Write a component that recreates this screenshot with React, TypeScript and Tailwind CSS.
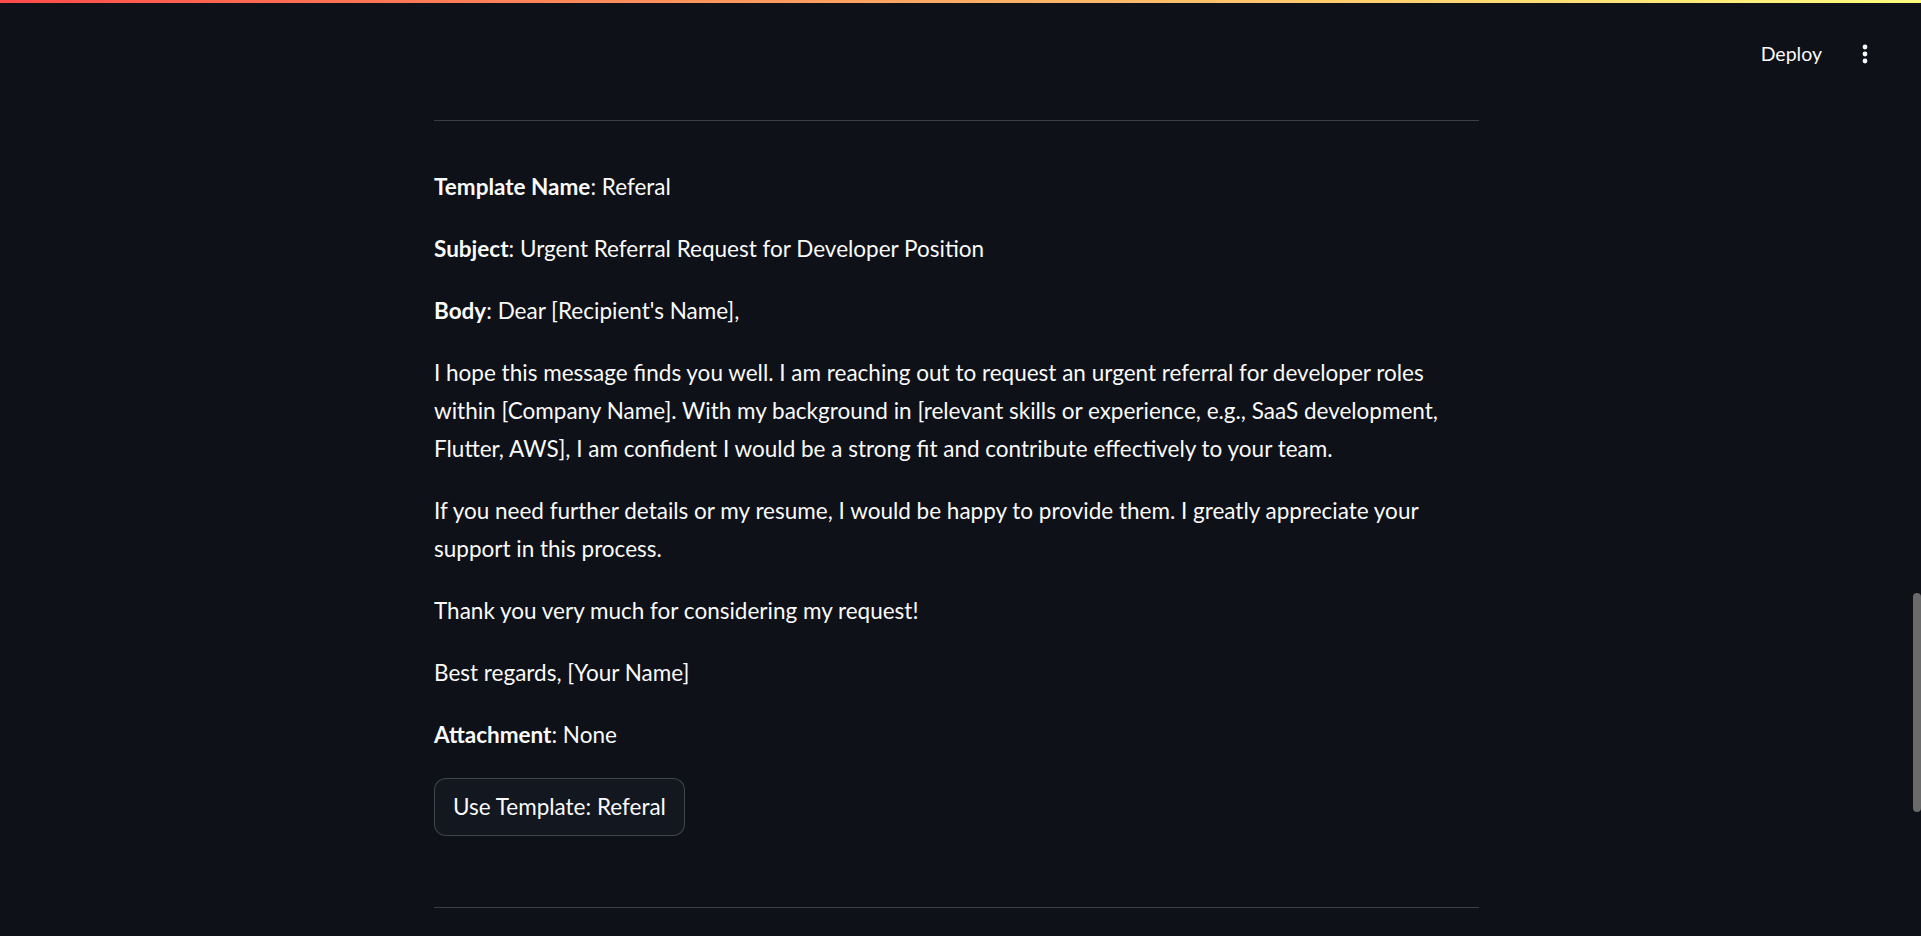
const paragraphs = [
  "I hope this message finds you well. I am reaching out to request an urgent referral for developer roles within [Company Name]. With my background in [relevant skills or experience, e.g., SaaS development, Flutter, AWS], I am confident I would be a strong fit and contribute effectively to your team.",
  "If you need further details or my resume, I would be happy to provide them. I greatly appreciate your support in this process.",
  "Thank you very much for considering my request!",
  "Best regards, [Your Name]",
]

function Field({ label, value }: { label: string; value: string }) {
  return (
    <p className="mb-[24px]">
      <span className="font-bold">{label}</span>: {value}
    </p>
  )
}

function KebabIcon() {
  return (
    <svg width="24" height="24" viewBox="0 0 24 24" fill="currentColor">
      <circle cx="12" cy="5" r="2.4" />
      <circle cx="12" cy="12" r="2.4" />
      <circle cx="12" cy="19" r="2.4" />
    </svg>
  )
}

export default function App() {
  return (
    <div className="flex h-screen flex-col overflow-hidden bg-[#0e1117] text-[#fafafa] [font-family:Lato,'Noto_Sans',sans-serif]">
      <div className="h-[3px] w-full shrink-0 bg-linear-to-r from-[#ff4b4b] to-[#fffd80]" />
      <div className="flex min-h-0 flex-1">
        <main className="min-w-0 flex-1">
          <header className="flex h-[102px] items-center justify-end gap-[31px] pr-[36px]">
            <span className="text-[19.5px]">Deploy</span>
            <KebabIcon />
          </header>
          <section className="mx-auto w-[1045px] pt-[15px] text-[22.5px] leading-[38px]">
            <hr className="border-0 border-t border-[#3b3e45]" />
            <div className="pt-[47px]">
              <Field label="Template Name" value="Referal" />
              <Field label="Subject" value="Urgent Referral Request for Developer Position" />
              <Field label="Body" value="Dear [Recipient's Name]," />
              {paragraphs.map(text => (
                <p key={text} className="mb-[24px]">
                  {text}
                </p>
              ))}
              <Field label="Attachment" value="None" />
              <button className="h-[58px] rounded-[12px] border border-[#fafafa]/20 bg-[#131720] px-[18px] text-[22.5px]">
                Use Template: Referal
              </button>
            </div>
            <hr className="mt-[71px] border-0 border-t border-[#3b3e45]" />
          </section>
        </main>
        <div className="w-[8px] shrink-0">
          <div className="mt-[590px] h-[219px] rounded-full bg-[#6a6a6a]" />
        </div>
      </div>
    </div>
  )
}
